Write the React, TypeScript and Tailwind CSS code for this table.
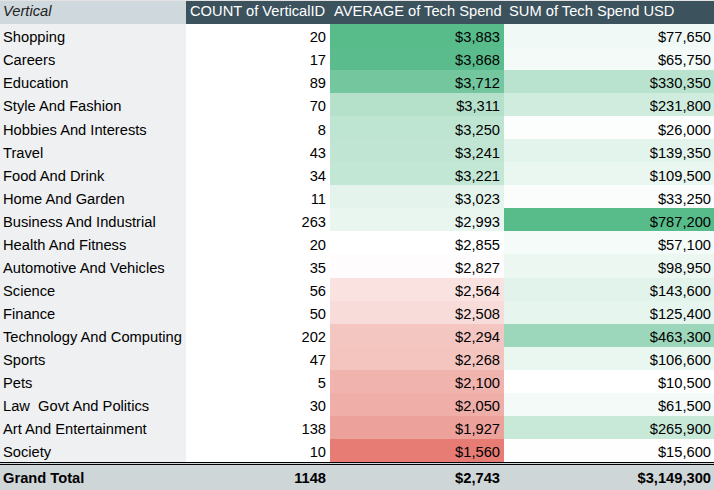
const rows = [
  { name: "Shopping", count: 20, avg: "$3,883", avgBg: "bg-[#57bb8a]", sum: "$77,650", sumBg: "bg-[#f0f9f5]" },
  { name: "Careers", count: 17, avg: "$3,868", avgBg: "bg-[#5abc8c]", sum: "$65,750", sumBg: "bg-[#f3faf7]" },
  { name: "Education", count: 89, avg: "$3,712", avgBg: "bg-[#73c69d]", sum: "$330,350", sumBg: "bg-[#bae3cf]" },
  { name: "Style And Fashion", count: 70, avg: "$3,311", avgBg: "bg-[#b5e1cb]", sum: "$231,800", sumBg: "bg-[#cfecde]" },
  { name: "Hobbies And Interests", count: 8, avg: "$3,250", avgBg: "bg-[#bee5d2]", sum: "$26,000", sumBg: "bg-[#fcfefd]" },
  { name: "Travel", count: 43, avg: "$3,241", avgBg: "bg-[#c0e5d3]", sum: "$139,350", sumBg: "bg-[#e3f4ec]" },
  { name: "Food And Drink", count: 34, avg: "$3,221", avgBg: "bg-[#c3e7d5]", sum: "$109,500", sumBg: "bg-[#eaf6f0]" },
  { name: "Home And Garden", count: 11, avg: "$3,023", avgBg: "bg-[#e4f4ec]", sum: "$33,250", sumBg: "bg-[#fafdfc]" },
  { name: "Business And Industrial", count: 263, avg: "$2,993", avgBg: "bg-[#e8f6ef]", sum: "$787,200", sumBg: "bg-[#57bb8a]" },
  { name: "Health And Fitness", count: 20, avg: "$2,855", avgBg: "bg-white", sum: "$57,100", sumBg: "bg-[#f5fbf8]" },
  { name: "Automotive And Vehicles", count: 35, avg: "$2,827", avgBg: "bg-[#fefcfc]", sum: "$98,950", sumBg: "bg-[#ecf7f2]" },
  { name: "Science", count: 56, avg: "$2,564", avgBg: "bg-[#f9e2df]", sum: "$143,600", sumBg: "bg-[#e2f3eb]" },
  { name: "Finance", count: 50, avg: "$2,508", avgBg: "bg-[#f8dcd9]", sum: "$125,400", sumBg: "bg-[#e6f5ee]" },
  { name: "Technology And Computing", count: 202, avg: "$2,294", avgBg: "bg-[#f4c6c2]", sum: "$463,300", sumBg: "bg-[#9dd7bb]" },
  { name: "Sports", count: 47, avg: "$2,268", avgBg: "bg-[#f4c4bf]", sum: "$106,600", sumBg: "bg-[#eaf7f0]" },
  { name: "Pets", count: 5, avg: "$2,100", avgBg: "bg-[#f0b3ad]", sum: "$10,500", sumBg: "bg-white" },
  { name: "Law  Govt And Politics", count: 30, avg: "$2,050", avgBg: "bg-[#efaea8]", sum: "$61,500", sumBg: "bg-[#f4faf7]" },
  { name: "Art And Entertainment", count: 138, avg: "$1,927", avgBg: "bg-[#eda19b]", sum: "$265,900", sumBg: "bg-[#c8e9d8]" },
  { name: "Society", count: 10, avg: "$1,560", avgBg: "bg-[#e67c73]", sum: "$15,600", sumBg: "bg-[#fefefe]" },
];

const cols = "grid grid-cols-[186px_144px_174px_210px]";

export default function App() {
  return (
    <div className="h-[490px] w-[714px] overflow-hidden bg-white font-['Liberation_Sans',Arial,sans-serif] text-[14.7px] leading-none text-black">
      {/* Header */}
      <div className={`${cols} h-[24px] whitespace-nowrap border-t border-[#e3e3e3]`}>
        <div className="flex items-end bg-[#cfd8dc] px-[3px] pb-[5px] italic text-[#222]">
          Vertical
        </div>
        <div className="flex items-end bg-[#3c525d] pl-[4px] pb-[5px] text-white">
          COUNT of VerticalID
        </div>
        <div className="flex items-end bg-[#3c525d] pl-[4px] pb-[5px] text-white">
          AVERAGE of Tech Spend
        </div>
        <div className="flex items-end bg-[#3c525d] pl-[5px] pb-[5px] text-white">
          SUM of Tech Spend USD
        </div>
      </div>

      {/* Rows */}
      {rows.map((row) => (
        <div key={row.name} className={`${cols} h-[23.05px] whitespace-nowrap`}>
          <div className="flex items-end whitespace-pre bg-[#eff0f1] px-[3px] pb-[2px]">
            {row.name}
          </div>
          <div className="flex items-end justify-end bg-white px-[4px] pb-[2px]">
            {row.count}
          </div>
          <div className={`flex items-end justify-end px-[4px] pb-[2px] ${row.avgBg}`}>
            {row.avg}
          </div>
          <div className={`flex items-end justify-end px-[3px] pb-[2px] ${row.sumBg}`}>
            {row.sum}
          </div>
        </div>
      ))}

      {/* Grand total */}
      <div className={`${cols} h-[28px] whitespace-nowrap border-t-[3px] border-double border-black bg-[#cfd6d8] font-bold`}>
        <div className="flex items-end px-[3px] pb-[4px]">Grand Total</div>
        <div className="flex items-end justify-end px-[4px] pb-[4px]">1148</div>
        <div className="flex items-end justify-end px-[4px] pb-[4px]">$2,743</div>
        <div className="flex items-end justify-end px-[3px] pb-[4px]">$3,149,300</div>
      </div>
    </div>
  );
}
